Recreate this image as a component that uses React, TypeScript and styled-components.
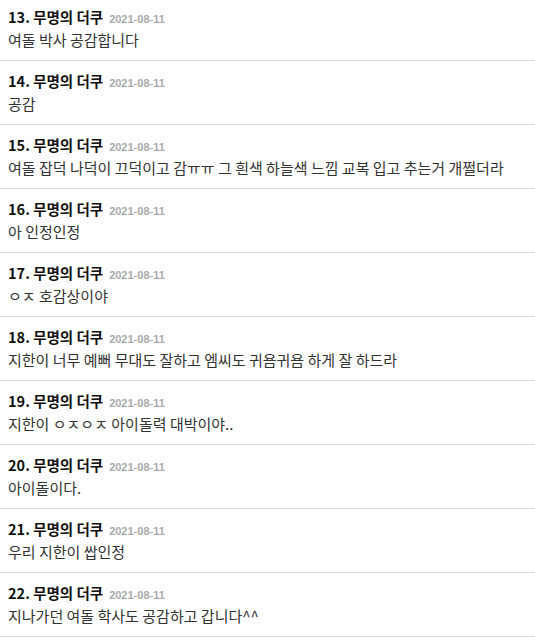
import React from 'react';
import styled, { createGlobalStyle } from 'styled-components';

const GlobalStyle = createGlobalStyle`
    body {
        margin: 0;
        background: #fff;
        font-family: "Noto Sans CJK KR", "Noto Sans", sans-serif;
    }
`;

const CommentList = styled.ul`
    list-style: none;
    margin: -3px 0 0;
    padding: 0;
    overflow: hidden;
`;

const CommentItem = styled.li`
    padding: 10px 8px 6px;
    border-bottom: 1px solid #dcdcdc;
`;

const Header = styled.div`
    display: flex;
    align-items: baseline;
    gap: 6px;
    height: 19px;
    line-height: 20px;
`;

const Author = styled.span`
    font-size: 14.5px;
    font-weight: 700;
    color: #111;
`;

const DateText = styled.span`
    font-size: 11px;
    font-weight: 700;
    color: #aaa;
    font-family: "Liberation Sans", Arial, sans-serif;
`;

const Body = styled.div`
    font-size: 15px;
    line-height: 28px;
    color: #333;
`;

const comments = [
    { no: 13, text: '여돌 박사 공감합니다' },
    { no: 14, text: '공감' },
    { no: 15, text: '여돌 잡덕 나덕이 끄덕이고 감ㅠㅠ 그 흰색 하늘색 느낌 교복 입고 추는거 개쩔더라' },
    { no: 16, text: '아 인정인정' },
    { no: 17, text: 'ㅇㅈ 호감상이야' },
    { no: 18, text: '지한이 너무 예뻐 무대도 잘하고 엠씨도 귀욤귀욤 하게 잘 하드라' },
    { no: 19, text: '지한이 ㅇㅈㅇㅈ 아이돌력 대박이야..' },
    { no: 20, text: '아이돌이다.' },
    { no: 21, text: '우리 지한이 쌉인정' },
    { no: 22, text: '지나가던 여돌 학사도 공감하고 갑니다^^' },
];

const App: React.FC = () => {
    return (
        <>
            <GlobalStyle />
            <CommentList>
                {comments.map((c) => (
                    <CommentItem key={c.no}>
                        <Header>
                            <Author>{c.no}. 무명의 더쿠</Author>
                            <DateText>2021-08-11</DateText>
                        </Header>
                        <Body>{c.text}</Body>
                    </CommentItem>
                ))}
            </CommentList>
        </>
    );
};

export default App;
